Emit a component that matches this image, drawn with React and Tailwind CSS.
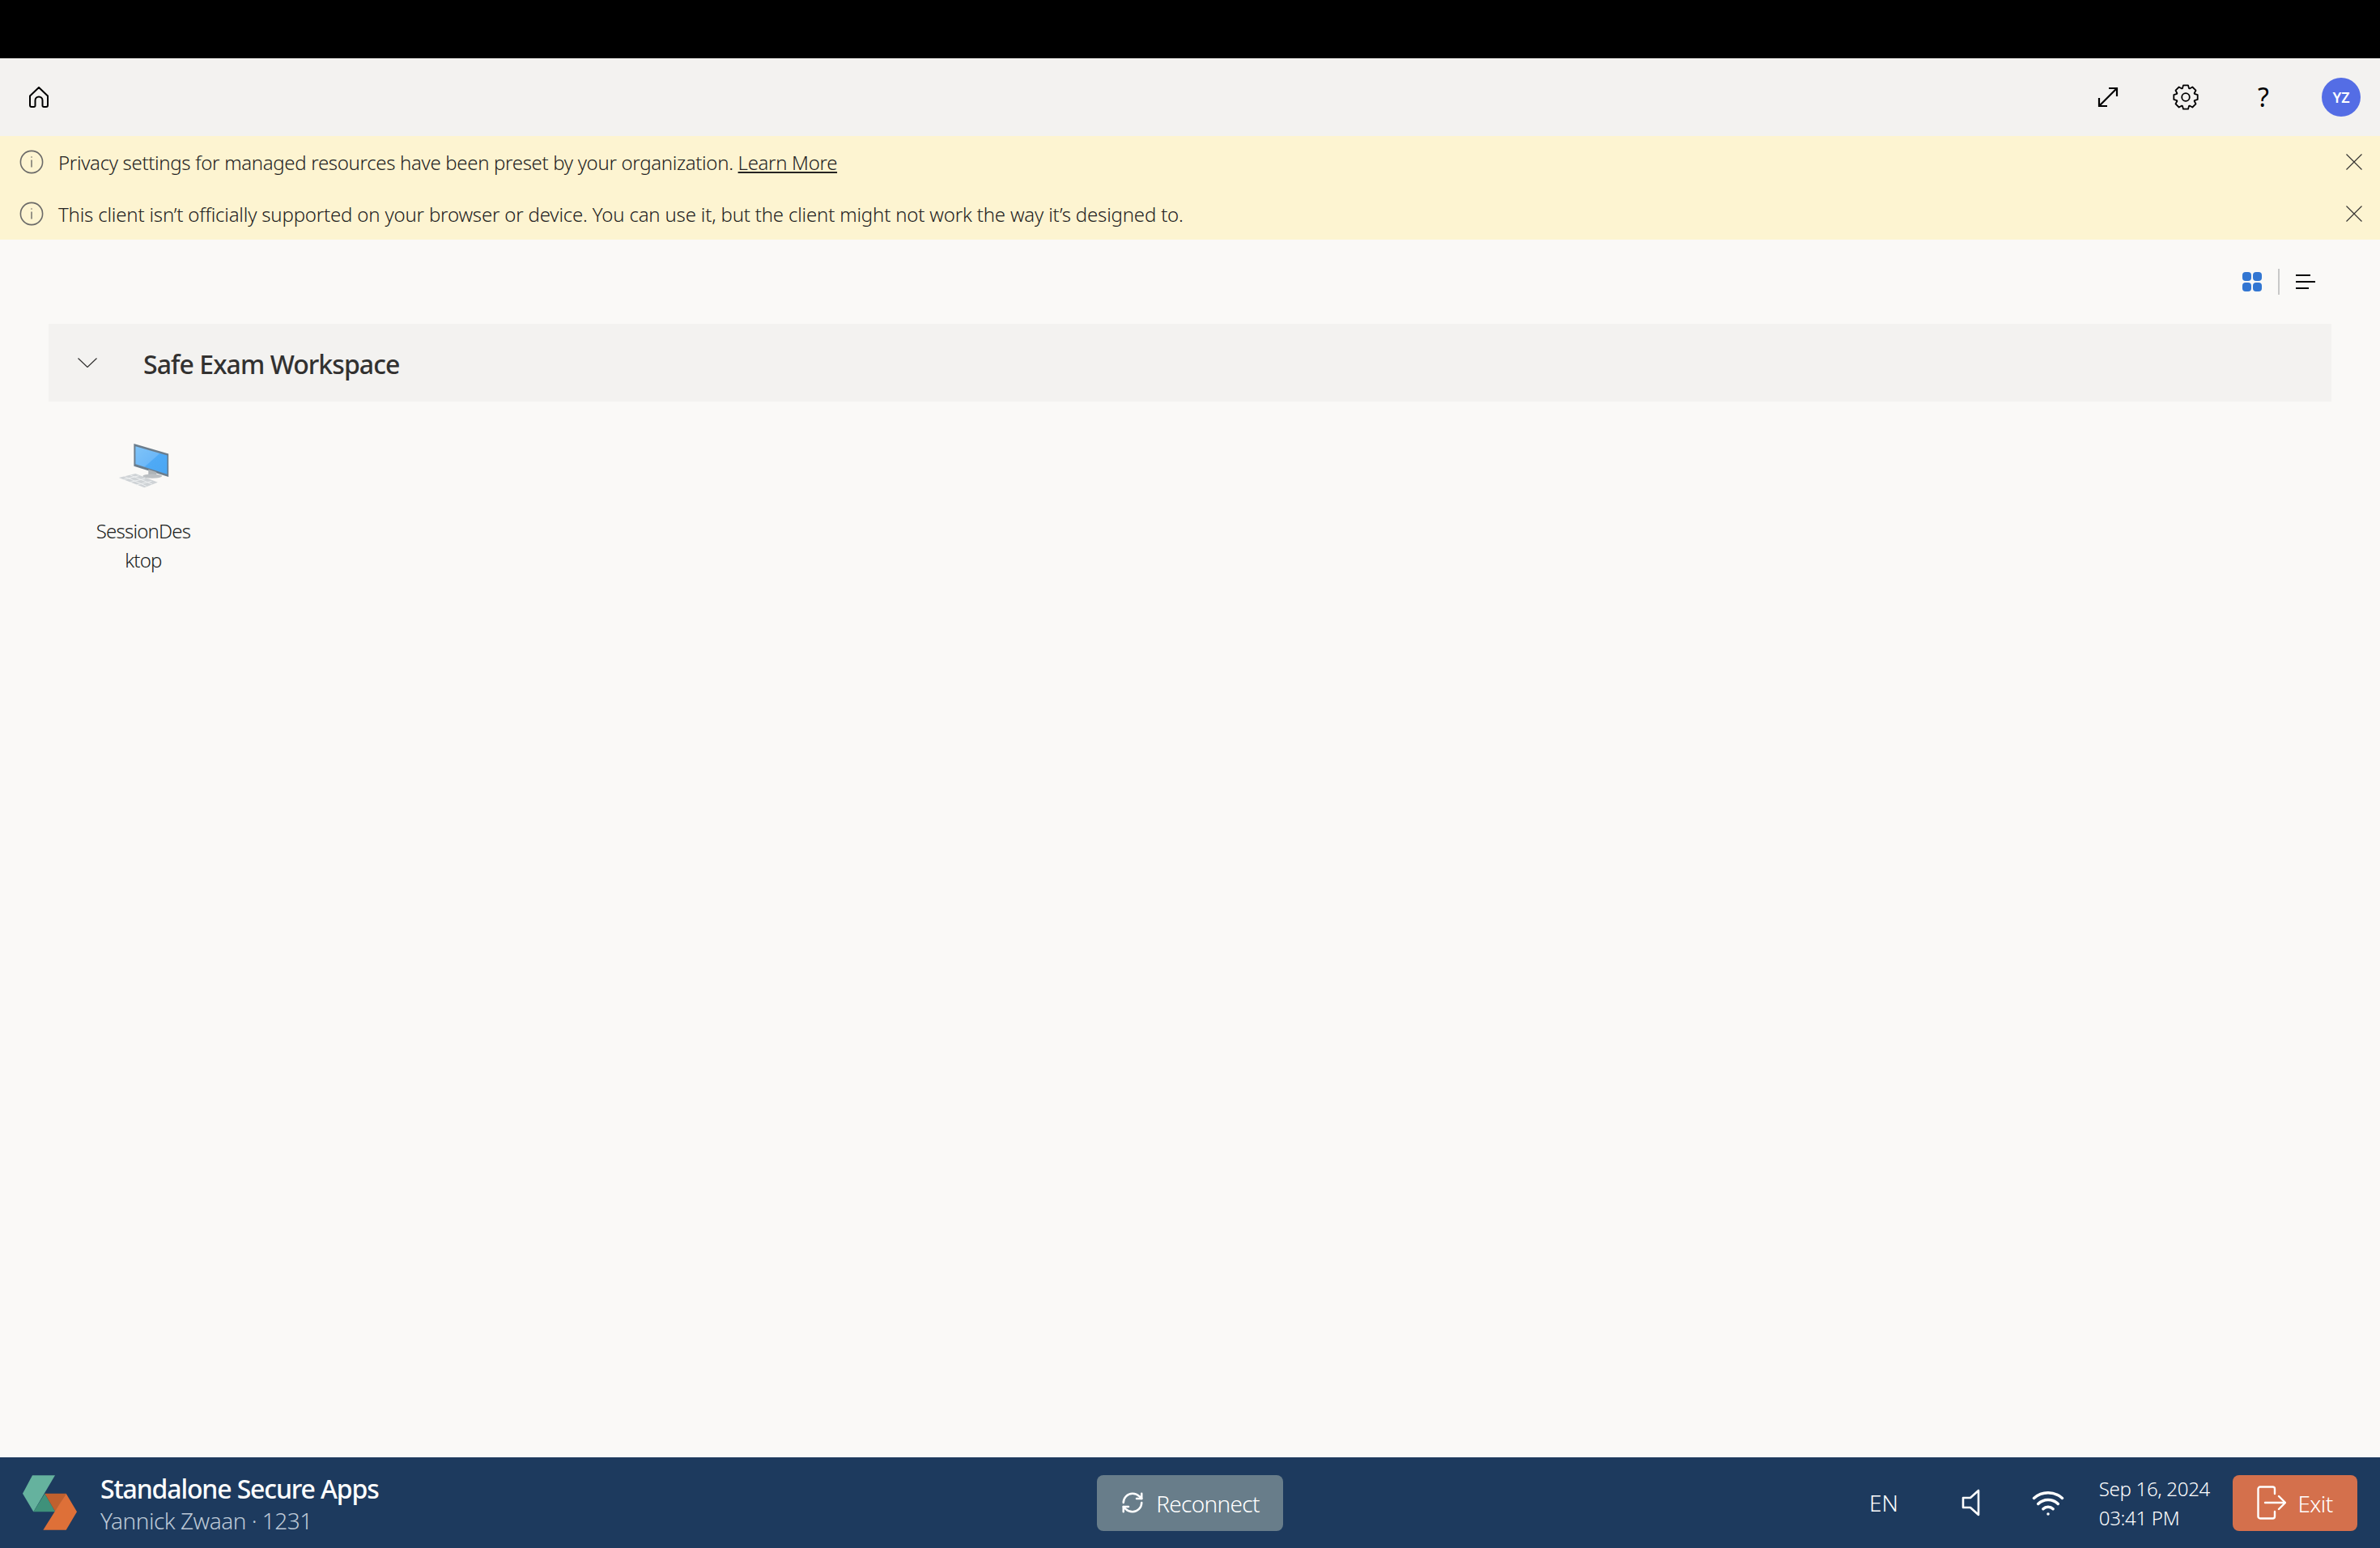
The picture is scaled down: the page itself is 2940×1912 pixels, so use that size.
import { RefreshCw, Wifi } from 'lucide-react';

const bannerRows = [
  {
    tracking: 'tracking-[-0.33px]',
    text: <>Privacy settings for managed resources have been preset by your organization. <span className="underline">Learn More</span></>
  },
  {
    tracking: 'tracking-[-0.19px]',
    text: <>This client isn’t officially supported on your browser or device. You can use it, but the client might not work the way it’s designed to.</>
  }
];

// 8 tooth cog outline, worked out once instead of typing 40 points
const cogPath = (() => {
  const pts = [];
  for (let i = 0; i < 8; i++) {
    const a = (i * Math.PI) / 4;
    [[11.6, -0.36], [15, -0.2], [15, 0.2], [11.6, 0.36]].forEach(([r, d]) => {
      pts.push(`${(16 + r * Math.sin(a + d)).toFixed(2)} ${(16 - r * Math.cos(a + d)).toFixed(2)}`);
    });
  }
  return `M${pts.join(' L')} Z`;
})();

function InfoIcon() {
  return (
    <svg viewBox="0 0 30 30" className="w-[30px] h-[30px] shrink-0" fill="none" stroke="#6b6a68" strokeWidth="1.6">
      <circle cx="15" cy="15" r="13.6" />
      <circle cx="15" cy="9" r="0.8" fill="#6b6a68" stroke="none" />
      <path d="M15 12.5v9" strokeWidth="1.4" />
    </svg>
  );
}

function CloseIcon() {
  return (
    <svg viewBox="0 0 20 20" className="w-5 h-5 shrink-0" fill="none" stroke="#323130" strokeWidth="1.1">
      <path d="M0.5 0.5 L19.5 19.5 M19.5 0.5 L0.5 19.5" />
    </svg>
  );
}

function DesktopIcon() {
  return (
    <svg viewBox="255 470 195 175" className="w-[65px] h-[58px]">
      <defs>
        <linearGradient id="scr" x1="0" y1="0" x2="1" y2="1">
          <stop offset="0" stopColor="#80c4f8" />
          <stop offset="0.5" stopColor="#6db8f8" />
          <stop offset="0.52" stopColor="#4faaf6" />
          <stop offset="1" stopColor="#4aa6f2" />
        </linearGradient>
      </defs>
      <polygon points="316,476 445,514 445,600 316,560" fill="#6b7d8c" />
      <polygon points="322,486 440,520 440,590 322,552" fill="url(#scr)" />
      <polygon points="370,572 400,582 400,600 370,592" fill="#aeb4b8" />
      <ellipse cx="385" cy="597" rx="36" ry="8" fill="#bcc0c3" />
      <polygon points="260,603 322,588 405,620 355,640" fill="#cfd3d6" />
      <path d="M280 598 L362 634 M302 593 L384 627 M276 610 L334 596 M300 620 L358 606 M324 630 L382 616" stroke="#eef0f1" strokeWidth="3" fill="none" />
    </svg>
  );
}

export default function App() {
  return (
    <div className="h-screen flex flex-col bg-[#faf9f7] text-[#242322] font-['Noto_Sans',sans-serif] overflow-hidden">

      {/* top bar */}
      <div className="h-[72px] bg-black shrink-0" />

      {/* header */}
      <div className="h-24 bg-[#f3f2f0] flex items-center justify-between shrink-0">
        <div className="w-24 h-24 flex items-center justify-center">
          <svg viewBox="0 0 24 26" className="w-6 h-[26px]" fill="none" stroke="#000" strokeWidth="2" strokeLinejoin="round">
            <path d="M12 1 L23 11.5 V23 a2 2 0 0 1-2 2 h-3 a1.5 1.5 0 0 1-1.5-1.5 V17 a4.5 4.5 0 0 0-9 0 v6.5 A1.5 1.5 0 0 1 6 25 H3 a2 2 0 0 1-2-2 V11.5 Z" />
          </svg>
        </div>
        <div className="flex items-center">
          <div className="w-24 h-24 flex items-center justify-center">
            <svg viewBox="0 0 26 26" className="w-[26px] h-[26px]" fill="none" stroke="#000" strokeWidth="2.2">
              <path d="M2 24 L24 2 M14 2 H24 V12 M2 14 V24 H12" />
            </svg>
          </div>
          <div className="w-24 h-24 flex items-center justify-center">
            <svg viewBox="0 0 32 32" className="w-8 h-8" fill="none" stroke="#000" strokeWidth="1.8" strokeLinejoin="round">
              <path d={cogPath} />
              <circle cx="16" cy="16" r="4.8" />
            </svg>
          </div>
          <div className="w-24 h-24 flex items-center justify-center text-[32px] leading-none text-black">?</div>
          <div className="w-24 h-24 flex items-center justify-center">
            <div className="w-12 h-12 rounded-full bg-[#546de5] text-white text-[18px] font-semibold flex items-center justify-center">YZ</div>
          </div>
        </div>
      </div>

      {/* banners */}
      <div className="bg-[#fdf4d1] shrink-0">
        {bannerRows.map((row, i) => (
          <div key={i} className="h-16 flex items-center pl-6 pr-[22px]">
            <InfoIcon />
            <span className={`ml-[18px] flex-1 pt-[2px] text-[24px] font-light ${row.tracking}`}>{row.text}</span>
            <CloseIcon />
          </div>
        ))}
      </div>

      {/* content */}
      <div className="flex-1 px-[60px]">
        <div className="h-[104px] flex items-center justify-end pr-5">
          <div className="grid grid-cols-2 gap-[2px] w-6 h-6">
            <div className="rounded-[4px] bg-[#3276d2]" />
            <div className="rounded-[4px] bg-[#3276d2]" />
            <div className="rounded-[4px] bg-[#3276d2]" />
            <div className="rounded-[4px] bg-[#3276d2]" />
          </div>
          <div className="w-[2px] h-8 bg-[#c8c8c8] mx-5" />
          <div className="w-6 flex flex-col gap-[6px]">
            <div className="w-[18px] h-[2px] bg-black" />
            <div className="w-6 h-[2px] bg-black" />
            <div className="w-4 h-[2px] bg-black" />
          </div>
        </div>

        <div className="h-24 bg-[#f3f2f0] flex items-center pl-9">
          <svg viewBox="0 0 24 12" className="w-6 h-3" fill="none" stroke="#323130" strokeWidth="1.2">
            <path d="M0.5 0.5 L12 11.5 L23.5 0.5" />
          </svg>
          <span className="ml-[57px] pt-1 text-[32px] font-medium tracking-[-0.95px] text-[#323130]">Safe Exam Workspace</span>
        </div>

        <div className="w-[122px] ml-[56px] pt-[50px] flex flex-col items-center">
          <DesktopIcon />
          <div className="mt-[34px] w-full text-center text-[24px] font-light leading-[36px] tracking-[-0.8px] text-[#201f1e] break-all">SessionDesktop</div>
        </div>
      </div>

      {/* footer */}
      <div className="h-[112px] bg-[#1d3a5e] flex items-center text-white shrink-0">
        <div className="flex-1 flex items-center pl-7">
          <svg viewBox="84 97 201 203" className="w-[67px] h-[68px]">
            <polygon points="120,97 204,97 124,232 84,165" fill="#65b29e" />
            <polygon points="166,165 205,232 124,232" fill="#3f917a" />
            <polygon points="166,165 245,165 205,232" fill="#c0602e" />
            <polygon points="245,165 285,232 245,300 160,300" fill="#de7038" />
          </svg>
          <div className="ml-[29px] flex flex-col pt-[2px]">
            <span className="text-[32px] leading-[42px] font-medium tracking-[-1.15px]">Standalone Secure Apps</span>
            <span className="text-[28px] leading-[36px] font-light text-[#bcc8d6] tracking-[-0.5px]">Yannick Zwaan · 1231</span>
          </div>
        </div>

        <div className="w-[230px] h-[69px] rounded-lg bg-[#687d8a] flex items-center justify-center gap-[14px]">
          <RefreshCw size={30} strokeWidth={2} />
          <span className="pt-[2px] text-[28px] font-light tracking-[-0.7px]">Reconnect</span>
        </div>

        <div className="flex-1 flex items-center justify-end pr-7">
          <span className="text-[28px] font-light tracking-[-0.1px]">EN</span>
          <svg viewBox="0 0 24 36" className="ml-[78px] w-6 h-9" fill="none" stroke="#fff" strokeWidth="2.6" strokeLinejoin="round">
            <path d="M21 3 V33 L11 24 H2 V12 H11 Z" />
          </svg>
          <Wifi size={42} strokeWidth={2} className="ml-[62px]" />
          <div className="ml-[42px] pt-[2px] flex flex-col text-[24px] font-light leading-[36px] tracking-[-0.3px]">
            <span>Sep 16, 2024</span>
            <span>03:41 PM</span>
          </div>
          <div className="ml-7 w-[154px] h-[69px] rounded-lg bg-[#d4704c] flex items-center justify-center gap-[14px]">
            <svg viewBox="0 0 36 42" className="w-9 h-[42px]" fill="none" stroke="#fff" strokeWidth="2.4" strokeLinecap="round" strokeLinejoin="round">
              <path d="M22 10 V4 a2.5 2.5 0 0 0-2.5-2.5 H4 A2.5 2.5 0 0 0 1.5 4 v34 a2.5 2.5 0 0 0 2.5 2.5 h15.5 a2.5 2.5 0 0 0 2.5-2.5 v-6" />
              <path d="M10 21 H34 M27 13 L35 21 L27 29" />
            </svg>
            <span className="pt-[2px] text-[28px] font-light tracking-[-0.6px]">Exit</span>
          </div>
        </div>
      </div>
    </div>
  );
}
